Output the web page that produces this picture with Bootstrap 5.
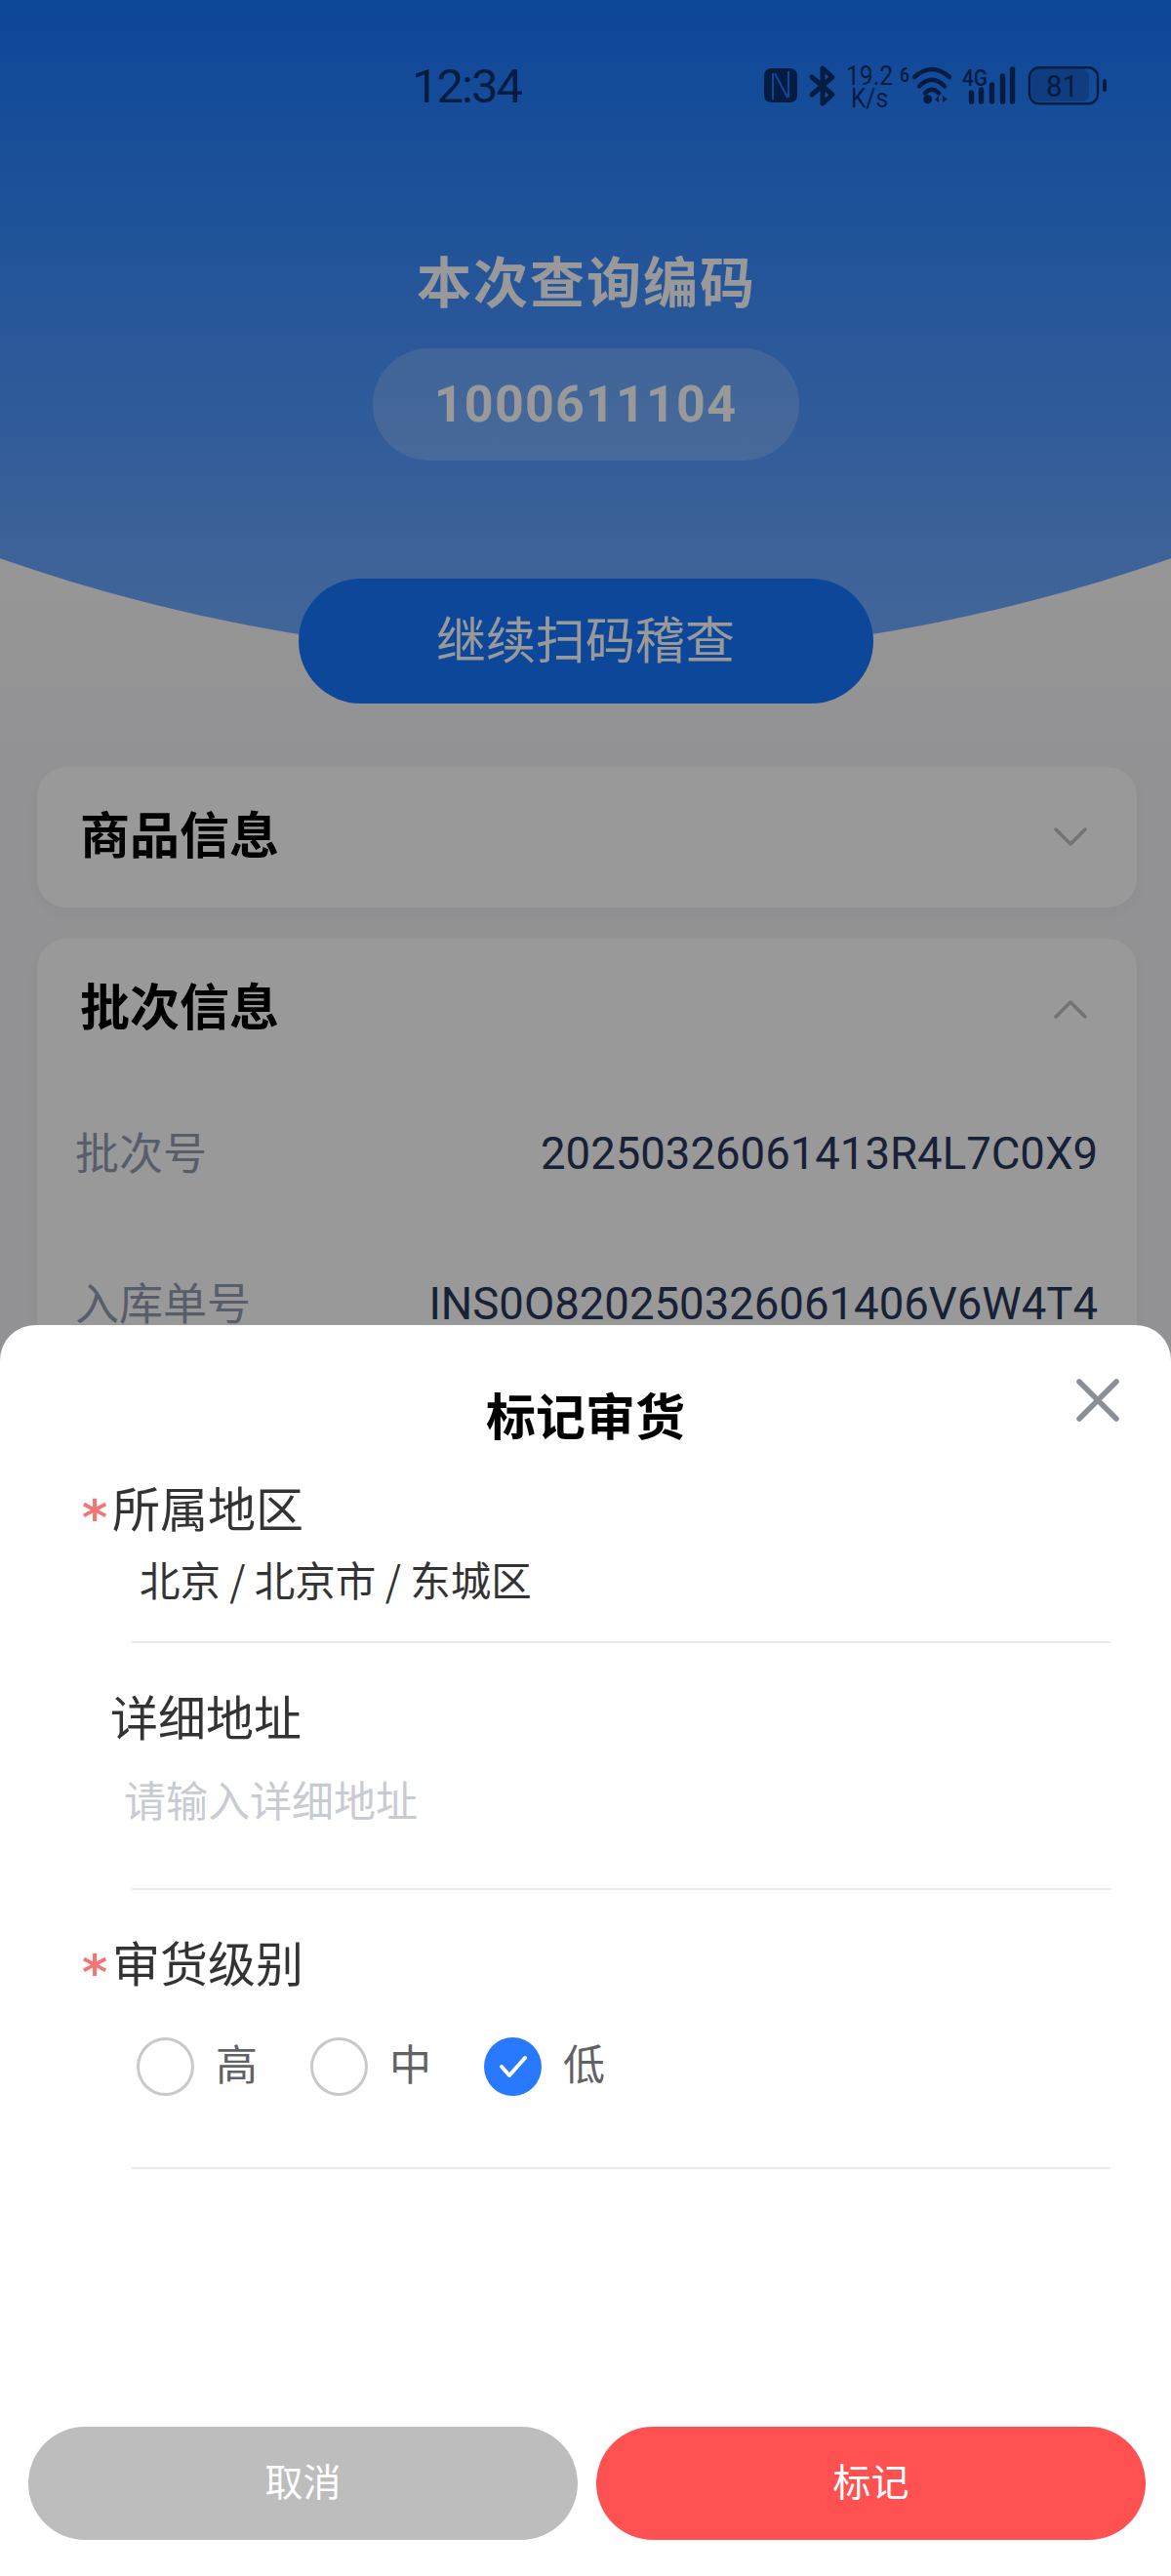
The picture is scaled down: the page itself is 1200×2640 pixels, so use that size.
<!DOCTYPE html>
<html lang="zh-CN">
<head>
<meta charset="utf-8">
<title>标记审货</title>
<link href="https://cdn.jsdelivr.net/npm/bootstrap@5.3.0/dist/css/bootstrap.min.css" rel="stylesheet">
<style>
html,body{height:2640px;}
body{position:relative;overflow:hidden;margin:0;background:linear-gradient(180deg,#fbfbfb 570px,#f4f4f7 790px);font-family:"Noto Sans CJK SC","Noto Sans",sans-serif;color:#000;}
.hero{height:674px;clip-path:circle(1820px at 600px -1146px);background:linear-gradient(180deg,#1677ff 0,#73acff 100%);}
.statusbar{height:108px;padding-top:68px;padding-left:422px;padding-right:66px;color:#09306f;}
.sb-time{font:400 49px/44px "Roboto",sans-serif;letter-spacing:-2px;position:relative;top:1px;}
.sb-icons{width:351px;height:40px;flex:none;}
.sb-icons text{font-family:"Roboto",sans-serif;fill:#09306f;}
.hero-title{margin-top:151px;font-size:56px;line-height:54px;font-weight:700;color:#fff;letter-spacing:2px;padding-left:2px;}
.code-pill{width:437px;height:115px;margin-top:44px;background:rgba(255,255,255,.2);font:700 52px/115px "Roboto",sans-serif;color:#fff;letter-spacing:1.2px;}
.scan-btn{position:relative;width:589px;height:128px;margin-top:-81px;background:#1677ff;border:0;border-radius:64px;color:#fff;font-size:51px;line-height:120px;padding:0 0 8px;}
.scan-btn:hover{background:#1677ff;color:#fff;}
.fold{margin:65px 35px 0 38px;background:#fff;border:0;border-radius:30px;box-shadow:0 6px 20px rgba(0,0,0,.04);}
.fold + .fold{margin-top:32px;}
.fold-head{height:144px;padding:0 51px 0 44px;}
.fold-head h2{font-size:51px;font-weight:700;margin:-10px 0 0;line-height:134px;}
.chev{width:34px;height:20px;}
.kv-row{height:154px;padding:0 40px 0 39px;font-size:45px;}
.kv-row:first-of-type{margin-top:-12px;}
.kv-key{color:#919db1;margin-top:-6px;}
.kv-val{font-family:"Roboto",sans-serif;color:#2b375c;font-weight:400;font-size:45.500px;}
.dim-layer{position:absolute;inset:0;background:rgba(0,0,0,.4);}
.sheet{position:absolute;left:0;right:0;top:1358px;bottom:0;background:#fff;border-radius:36px 36px 0 0;}
.sheet-top{height:156px;position:relative;}
.sheet-top h3{font-size:51px;font-weight:700;margin:0;padding-top:55px;line-height:72px;text-align:center;}
.x-btn{position:absolute;right:52px;top:54px;width:46px;height:46px;display:block;}
.form-item{padding:0 62px 0 0;}
.form-label{display:flex;align-items:flex-start;margin:0;padding-left:84px;color:#333;font-size:49px;line-height:60px;height:60px;}
.req{width:31px;color:#f47575;font:700 50px/84px "DejaVu Sans",sans-serif;}
.no-req{width:29px;}
.form-line{margin-left:135px;border-bottom:2px solid #e9ecef;}
.val-text{font-size:41.5px;color:#333;padding-left:8px;line-height:60px;padding-top:14px;}
.ph-text{font-size:43px;color:#c8cbd3;line-height:60px;margin-left:-8px;padding-top:25px;}
.line-a{height:110px;}
.line-b{height:149px;}
.line-c{height:183px;}
.item-b{padding-top:44px;}
.item-c{padding-top:43px;}
.rad-row{gap:54px;padding-left:5px;padding-top:47px;}
.rad-opt{gap:22px;font-size:43px;color:#606266;line-height:52px;}
.rad-dot{width:59px;height:60px;border-radius:50%;border:3.5px solid #c8c9cc;display:flex;align-items:center;justify-content:center;flex:none;}
.rad-dot.on{background:#2979ff;border-color:#2979ff;}
.rad-txt{padding-bottom:10px;}
.sheet-btns{position:absolute;left:29px;right:26px;top:1129px;gap:19px;}
.act{height:116px;border:0;border-radius:58px;color:#fff;font-size:39px;line-height:108px;padding:0 0 8px;flex:1 1 0;}
.act-gray,.act-gray:hover{background:#bdbdbd;color:#fff;}
.act-red,.act-red:hover{background:#ff5052;color:#fff;}
</style>
</head>
<body>
<div class="hero">
  <div class="statusbar d-flex justify-content-between align-items-center">
    <div class="sb-time">12:34</div>
    <svg class="sb-icons" viewBox="0 0 351 40" overflow="visible" aria-hidden="true">
      <rect x="0" y="2" width="34" height="35" rx="7" fill="#09306f"/>
      <path d="M9 7v27M11 7l13 25M25 5v27" fill="none" stroke="#1677ff" stroke-width="2"/>
      <path d="M49 11l21 18-10 9V2l10 9-21 18" fill="none" stroke="#09306f" stroke-width="5" stroke-linejoin="round" stroke-linecap="round"/>
      <text x="84" y="19" font-size="27" textLength="48" lengthAdjust="spacingAndGlyphs">19.2</text>
      <text x="89" y="42" font-size="27" textLength="38" lengthAdjust="spacingAndGlyphs">K/s</text>
      <text x="139" y="16" font-size="20" font-weight="500" textLength="10" lengthAdjust="spacingAndGlyphs">6</text>
      <path d="M154 11Q172-5 190 11M159 20.5Q172 7 185 20.5M165 27.5Q172 20 179 27.5" fill="none" stroke="#09306f" stroke-width="4.5" stroke-linecap="round"/>
      <circle cx="167.700" cy="33.700" r="4.500" fill="#09306f"/>
      <path d="M175 34l4-4v7zM183 30v7l5-3.500z" fill="#09306f"/>
      <text x="203" y="20" font-size="23" font-weight="500" textLength="26" lengthAdjust="spacingAndGlyphs">4G</text>
      <path d="M212.500 27v9M222.500 24v12M233.500 19v17M244.500 10v26M254.500 3v33" fill="none" stroke="#09306f" stroke-width="5.500" stroke-linecap="round"/>
      <rect x="274" y="3" width="59" height="33" rx="7" fill="#09306f" fill-opacity=".3"/>
      <rect x="272" y="1.300" width="70" height="37" rx="10" fill="none" stroke="#09306f" stroke-width="2.500"/>
      <text x="289" y="31" font-size="31" textLength="33" lengthAdjust="spacingAndGlyphs">81</text>
      <path d="M349 15v9" fill="none" stroke="#09306f" stroke-width="4" stroke-linecap="round"/>
    </svg>
  </div>
  <div class="hero-title text-center">本次查询编码</div>
  <div class="code-pill rounded-pill text-center mx-auto">1000611104</div>
</div>
<button type="button" class="btn scan-btn d-block mx-auto">继续扫码稽查</button>
<section class="card fold">
  <div class="fold-head d-flex justify-content-between align-items-center">
    <h2>商品信息</h2>
    <svg class="chev" viewBox="0 0 34 20"><path d="M2 2l15 15L32 2" fill="none" stroke="#c0c0c0" stroke-width="3.500" stroke-linecap="round" stroke-linejoin="round"/></svg>
  </div>
</section>
<section class="card fold">
  <div class="fold-head d-flex justify-content-between align-items-center">
    <h2>批次信息</h2>
    <svg class="chev" viewBox="0 0 34 20"><path d="M2 18L17 3l15 15" fill="none" stroke="#c0c0c0" stroke-width="3.500" stroke-linecap="round" stroke-linejoin="round"/></svg>
  </div>
  <div class="kv-row d-flex justify-content-between align-items-center">
    <span class="kv-key">批次号</span><span class="kv-val">20250326061413R4L7C0X9</span>
  </div>
  <div class="kv-row d-flex justify-content-between align-items-center">
    <span class="kv-key">入库单号</span><span class="kv-val">INS0O820250326061406V6W4T4</span>
  </div>
</section>
<div class="dim-layer"></div>
<div class="sheet">
  <div class="sheet-top">
    <h3>标记审货</h3>
    <svg class="x-btn" viewBox="0 0 46 46"><path d="M4 4l38 38M42 4L4 42" fill="none" stroke="#8a8e96" stroke-width="5.500" stroke-linecap="round"/></svg>
  </div>
  <div class="form-item">
    <div class="form-label"><span class="req">*</span>所属地区</div>
    <div class="form-line line-a"><div class="val-text">北京 / 北京市 / 东城区</div></div>
  </div>
  <div class="form-item item-b">
    <div class="form-label"><span class="no-req"></span>详细地址</div>
    <div class="form-line line-b"><div class="ph-text">请输入详细地址</div></div>
  </div>
  <div class="form-item item-c">
    <div class="form-label"><span class="req">*</span>审货级别</div>
    <div class="form-line line-c">
      <div class="rad-row d-flex">
        <div class="rad-opt d-flex align-items-center"><span class="rad-dot"></span><span class="rad-txt">高</span></div>
        <div class="rad-opt d-flex align-items-center"><span class="rad-dot"></span><span class="rad-txt">中</span></div>
        <div class="rad-opt d-flex align-items-center"><span class="rad-dot on"><svg width="30" height="24" viewBox="0 0 30 24"><path d="M3 12l8 9L27 3" fill="none" stroke="#fff" stroke-width="4" stroke-linecap="round" stroke-linejoin="round"/></svg></span><span class="rad-txt">低</span></div>
      </div>
    </div>
  </div>
  <div class="sheet-btns d-flex">
    <button type="button" class="btn act act-gray">取消</button>
    <button type="button" class="btn act act-red">标记</button>
  </div>
</div>
<script src="https://cdn.jsdelivr.net/npm/bootstrap@5.3.0/dist/js/bootstrap.bundle.min.js"></script>
</body>
</html>
